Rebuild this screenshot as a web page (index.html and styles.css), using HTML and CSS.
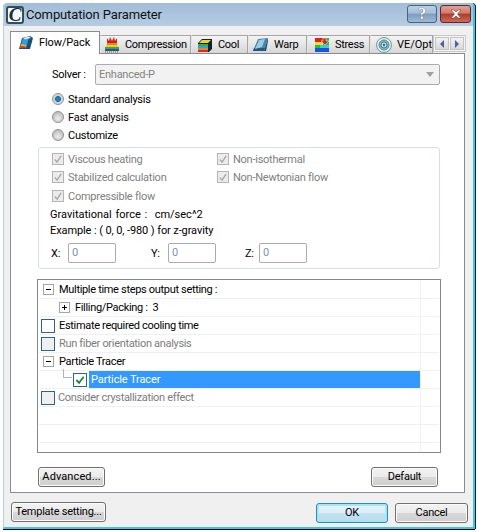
FILE: index.html
```html
<!DOCTYPE html>
<html lang="en">
<head>
<meta charset="utf-8">
<title>Computation Parameter</title>
<link rel="stylesheet" href="styles.css">
</head>
<body>
<div class="window">
  <header class="titlebar">
    <span class="app-logo">C</span>
    <span class="title">Computation Parameter</span>
    <span class="title-btn help">?</span>
    <span class="title-btn close">
      <svg width="14" height="10" viewBox="0 0 14 10"><path d="M2 1h3l2 2 2-2h3l-3.500 4 3.500 4h-3l-2-2-2 2h-3l3.500-4z" fill="#fff" stroke="#7a3a32" stroke-width=".6"/></svg>
    </span>
  </header>

  <div class="client">
    <div class="tabbar">
      <div class="tabs">
        <div class="tab active t-flow">
          <svg class="tab-icon" viewBox="0 0 16 16"><path d="M1 14 4 3l8-2 3 2-3 11z" fill="#1b4f72"/><path d="M2 13 4.500 4l6.500-2-2.500 10z" fill="#2a9fe0"/><path d="M2 13l1.200-4 5 1-.7 3z" fill="#f0b020"/><path d="M2 13l.6-2 5 .5-.4 1.500z" fill="#e03020"/><path d="M5 3l6-1.500 2 1.500-6 1.500z" fill="#dfe8ee"/></svg>
          <span>Flow/Pack</span>
        </div>
        <div class="tab t-comp">
          <svg class="tab-icon" viewBox="0 0 16 16"><path d="M1 12h14v2H1z" fill="#2050c0"/><path d="M1 10h14v2H1z" fill="#30b040"/><path d="M2 8h12v2H2z" fill="#f0d020"/><path d="M3 6h10v2H3z" fill="#f08020"/><path d="M3 1l2 3 1-4 2 4 2-4 1 4 2-3v5H3z" fill="#d02020"/><path d="M1 15h14" stroke="#c03030" stroke-dasharray="1 1"/></svg>
          <span>Compression</span>
        </div>
        <div class="tab t-cool">
          <svg class="tab-icon" viewBox="0 0 16 16"><path d="M1 6 5 2h10v10l-3 3H1z" fill="#123"/><path d="M2 6h9l3-3H5z" fill="#f0d020"/><path d="M1 9h10v2H1z" fill="#30a0e0"/><path d="M1 7h10v2H1z" fill="#30b040"/><path d="M1 11h10v2H1z" fill="#f08020"/><path d="M1 13h10v2H1z" fill="#d03020"/></svg>
          <span>Cool</span>
        </div>
        <div class="tab t-warp">
          <svg class="tab-icon" viewBox="0 0 16 16"><path d="M0 14 5 2l10-1-3 10z" fill="#3f88b0"/><path d="M0 14h11l1-3H1z" fill="#1f5a80"/><path d="M12 11l3-10v3l-2 10-2 0z" fill="#174562"/><path d="M2 12 6 3l6-1-3 8z" fill="#9ecbe2"/></svg>
          <span>Warp</span>
        </div>
        <div class="tab t-stress">
          <svg class="tab-icon" viewBox="0 0 16 16"><path d="M1 1h14v14H1z" fill="#20c040"/><path d="M1 1h10v4H1z" fill="#e02020"/><path d="M1 5h8v3H1z" fill="#f0e020"/><path d="M1 11h14v4H1z" fill="#2050e0"/><path d="M6 8h9v3H6z" fill="#30d0e0"/><path d="M9 1h3v3h3l-4 4-4-4h2z" fill="#d02020" stroke="#fff" stroke-width=".5"/></svg>
          <span>Stress</span>
        </div>
        <div class="tab t-ve">
          <svg class="tab-icon" viewBox="0 0 16 16"><circle cx="8" cy="8" r="7.500" fill="#e8f0f0" stroke="#6a9a9a"/><circle cx="8" cy="8" r="5" fill="#8fb8c8" stroke="#4a8a9a"/><circle cx="8" cy="8" r="3" fill="#cfe2ea" stroke="#3a7a90"/><circle cx="8" cy="8" r="1.200" fill="#2a6a80"/></svg>
          <span>VE/Opt</span>
        </div>
      </div>
      <div class="scroller">
        <span class="scroll-btn"><i class="arrow-left"></i></span>
        <span class="scroll-btn"><i class="arrow-right"></i></span>
      </div>
    </div>

    <section class="panel">
      <div class="solver-row">
        <label class="solver-label">Solver :</label>
        <div class="select">
          <span>Enhanced-P</span>
          <i class="caret"></i>
        </div>
      </div>

      <div class="radios">
        <div class="radio-row r1"><span class="radio on"></span><span class="radio-text">Standard analysis</span></div>
        <div class="radio-row r2"><span class="radio"></span><span class="radio-text">Fast analysis</span></div>
        <div class="radio-row r3"><span class="radio"></span><span class="radio-text">Customize</span></div>
      </div>

      <div class="group">
        <div class="checks">
          <div class="check-row"><span class="check"><svg viewBox="0 0 11 11"><path d="M2 6l2.500 3L9 2" class="tick"/></svg></span><span>Viscous heating</span></div>
          <div class="check-row"><span class="check"><svg viewBox="0 0 11 11"><path d="M2 6l2.500 3L9 2" class="tick"/></svg></span><span>Non-isothermal</span></div>
          <div class="check-row"><span class="check"><svg viewBox="0 0 11 11"><path d="M2 6l2.500 3L9 2" class="tick"/></svg></span><span>Stabilized calculation</span></div>
          <div class="check-row"><span class="check"><svg viewBox="0 0 11 11"><path d="M2 6l2.500 3L9 2" class="tick"/></svg></span><span>Non-Newtonian flow</span></div>
          <div class="check-row third"><span class="check"><svg viewBox="0 0 11 11"><path d="M2 6l2.500 3L9 2" class="tick"/></svg></span><span>Compressible flow</span></div>
        </div>
        <p class="note grav">Gravitational force :&nbsp; cm/sec^2</p>
        <p class="note example">Example : ( 0, 0, -980 ) for z-gravity</p>
        <div class="xyz">
          <label class="axis ax-x">X:</label><span class="num">0</span>
          <label class="axis ax-y">Y:</label><span class="num">0</span>
          <label class="axis ax-z">Z:</label><span class="num">0</span>
        </div>
      </div>

      <div class="tree">
        <div class="row">
          <div class="cell"><span class="exp minus"></span><span class="lbl">Multiple time steps output setting :</span></div><div class="end"></div>
        </div>
        <div class="row">
          <div class="cell lvl1"><span class="exp plus"></span><span class="lbl">Filling/Packing :&nbsp; 3</span></div><div class="end"></div>
        </div>
        <div class="row">
          <div class="cell"><span class="box"></span><span class="lbl">Estimate required cooling time</span></div><div class="end"></div>
        </div>
        <div class="row">
          <div class="cell"><span class="box dim"></span><span class="lbl muted">Run fiber orientation analysis</span></div><div class="end"></div>
        </div>
        <div class="row">
          <div class="cell"><span class="exp minus"></span><span class="lbl">Particle Tracer</span></div><div class="end"></div>
        </div>
        <div class="row">
          <div class="cell lvl2"><i class="elbow"></i><span class="box small"><svg viewBox="0 0 13 13"><path d="M2.500 6.500l3 3 5-6.500" class="green"/></svg></span><span class="lbl selected">Particle Tracer</span></div><div class="end"></div>
        </div>
        <div class="row">
          <div class="cell"><span class="box dim"></span><span class="lbl muted tight">Consider crystallization effect</span></div><div class="end"></div>
        </div>
        <div class="row"><div class="cell"></div><div class="end"></div></div>
        <div class="row"><div class="cell"></div><div class="end"></div></div>
        <div class="row last"><div class="cell"></div><div class="end"></div></div>
      </div>

      <div class="panel-actions">
        <button class="btn advanced">Advanced...</button>
        <button class="btn default">Default</button>
      </div>
    </section>

    <footer class="footer">
      <button class="btn template">Template setting...</button>
      <button class="btn ok">OK</button>
      <button class="btn cancel">Cancel</button>
    </footer>
  </div>
</div>
</body>
</html>
```

FILE: styles.css
```css
* { box-sizing: border-box; }
html, body { margin: 0; padding: 0; background: #fff; }
body {
  width: 477px;
  height: 532px;
  overflow: hidden;
  font-family: Roboto, "Liberation Sans", sans-serif;
  font-size: 11px;
  letter-spacing: -.25px;
  color: #000;
}
.window {
  width: 472px;
  height: 526px;
  margin: 3px 0 0 3px;
  display: flex;
  flex-direction: column;
  border-left: 1px solid #b7d0e6;
  border-right: 2px solid #3cc3f2;
  border-bottom: 2px solid #3cc3f2;
  border-radius: 4px 4px 0 0;
  box-shadow: 0 1px 0 #000, 1px 0 0 #222;
  background: #f0f0f0;
}

/* title bar */
.titlebar {
  height: 23px;
  flex: none;
  display: flex;
  align-items: center;
  padding: 0 1px 0 2px;
  background: linear-gradient(#a2bdd8, #b6cce2);
  border-radius: 4px 0 0 0;
}
.app-logo {
  width: 18px;
  height: 18px;
  margin-top: 1px;
  display: flex;
  align-items: center;
  justify-content: center;
  border: 2px solid #2f4f5f;
  border-radius: 3px;
  background: #f4f6f8;
  font-family: "Liberation Serif", serif;
  font-weight: bold;
  font-style: italic;
  font-size: 19px;
  letter-spacing: 0;
  color: #1c2c34;
}
.title {
  margin-left: 2px;
  font-size: 13px;
  letter-spacing: -.13px;
  color: #111;
  flex: 1;
}
.title-btn {
  height: 18px;
  width: 30px;
  margin-top: -1px;
  display: flex;
  align-items: center;
  justify-content: center;
  border: 1px solid #4d6276;
  border-radius: 3px;
}
.help {
  background: linear-gradient(#b9d0e6 0, #a5bfd9 45%, #7e9cbc 50%, #9db9d6 100%);
  color: #fff;
  font-family: "Liberation Serif", serif;
  font-weight: bold;
  font-size: 16px;
  text-shadow: 0 0 1px #223;
  margin-right: 3px;
}
.close {
  width: 31px;
  margin-right: 1px;
  background: linear-gradient(#e0a294 0, #cf7a6a 45%, #b03a2a 50%, #cc6a58 100%);
  border-color: #5d2a2a;
}

/* client */
.client {
  flex: 1;
  padding: 5px 0 0 6px;
  display: flex;
  flex-direction: column;
}
.tabbar {
  display: flex;
  height: 22px;
  width: 456px;
  position: relative;
  z-index: 2;
}
.tabs {
  display: flex;
  width: 423px;
  height: 23px;
  overflow: hidden;
  flex: none;
}
.tab {
  height: 18px;
  margin-top: 4px;
  display: flex;
  align-items: center;
  flex: none;
  font-size: 11px;
  letter-spacing: -.3px;
  border: 1px solid #a5a5a5;
  border-bottom: 0;
  border-left-color: #e6e6e6;
  background: linear-gradient(#f4f4f4, #d6d6d6);
}
.tab.active {
  height: 23px;
  margin-top: 0;
  padding-bottom: 1px;
  letter-spacing: -.1px;
  background: #fff;
  border: 1px solid #898c95;
  border-bottom: 0;
}
.tab-icon { width: 16px; height: 16px; flex: none; margin-right: 5px; }
.t-flow { width: 90px; padding-left: 7px; }
.t-comp { width: 91px; padding-left: 3px; }
.t-cool { width: 57px; padding-left: 5px; }
.t-warp { width: 59px; padding-left: 4px; }
.t-stress { width: 63px; padding-left: 6px; }
.t-ve { width: 63px; padding-left: 5px; white-space: nowrap; letter-spacing: 0; }
.scroller {
  margin-top: 4px;
  height: 17px;
  width: 33px;
  display: flex;
  gap: 1px;
  padding: 1px;
  border: 1px solid #c8c8c8;
  background: #f4f4f4;
  flex: none;
}
.scroll-btn {
  flex: 1;
  display: flex;
  align-items: center;
  justify-content: center;
  background: linear-gradient(#f2f2f2, #d8d8d8);
  border: 1px solid #c4c4c4;
}
.arrow-left, .arrow-right {
  width: 0;
  height: 0;
  border-top: 4px solid transparent;
  border-bottom: 4px solid transparent;
}
.arrow-left { border-right: 4px solid #4a5fa8; }
.arrow-right { border-left: 4px solid #4a5fa8; }

/* panel */
.panel {
  width: 455px;
  height: 440px;
  flex: none;
  border: 1px solid #898c95;
  background: #fff;
  padding: 10px 24px 0 27px;
}
.solver-row {
  display: flex;
  align-items: center;
  height: 21px;
  margin-left: 14px;
}
.solver-label { width: 43px; flex: none; }
.select {
  flex: 1;
  height: 21px;
  display: flex;
  align-items: center;
  justify-content: space-between;
  padding: 0 5px 0 3px;
  background: #f2f2f2;
  border: 1px solid #a8abaf;
  border-radius: 2px;
  color: #848484;
}
.caret {
  width: 0;
  height: 0;
  border-left: 4px solid transparent;
  border-right: 4px solid transparent;
  border-top: 5px solid #a0a0a0;
}
.radios { margin: 4px 0 0 14px; }
.radio-row { display: flex; align-items: center; height: 18px; }
.radio-row.r1 { height: 19px; }
.radio-text { padding-top: 1px; }
.radio {
  width: 12px;
  height: 12px;
  margin-right: 4px;
  border-radius: 50%;
  border: 1px solid #909090;
  background: radial-gradient(circle at 50% 65%, #ececec, #b0b0b0);
  flex: none;
}
.radio.on { background: radial-gradient(circle, #1e90c8 0, #1670a8 36%, #c8ced2 46%, #e8e8e8 100%); }

.group {
  width: 402px;
  height: 122px;
  margin-top: 3px;
  padding: 2px 0 0 13px;
  border: 1px solid #d5dfe5;
  border-radius: 3px;
}
.checks {
  display: grid;
  grid-template-columns: 165px 1fr;
  grid-auto-rows: 18px;
  color: #808080;
}
.check-row { display: flex; align-items: center; height: 18px; }
.check-row.third { margin-top: 1px; }
.check {
  width: 12px;
  height: 12px;
  margin-right: 4px;
  border: 1px solid #b4b4b4;
  background: #ececec;
  flex: none;
  display: flex;
}
.check svg { width: 100%; height: 100%; }
.tick { fill: none; stroke: #a8a8a8; stroke-width: 1.500; }
.note { margin: 0 0 0 -2px; line-height: 16px; height: 16px; letter-spacing: -.1px; }
.grav { margin-top: 3px; word-spacing: 1px; letter-spacing: 0; }
.xyz {
  display: flex;
  align-items: center;
  margin: 4px 0 0 -1px;
  height: 20px;
}
.axis { flex: none; padding-top: 1px; }
.ax-x { width: 17px; }
.ax-y { width: 17px; margin-left: 35px; }
.ax-z { width: 14px; margin-left: 29px; }
.num {
  width: 48px;
  height: 20px;
  padding: 2px 3px;
  border: 1px solid #ababab;
  border-radius: 2px;
  color: #7c93b8;
  flex: none;
}

/* tree list */
.tree {
  width: 404px;
  height: 174px;
  margin: 10px 0 0 -1px;
  padding: 1px;
  border: 1px solid #828790;
  overflow: hidden;
  letter-spacing: -.32px;
}
.row {
  display: flex;
  height: 18px;
  border-bottom: 1px solid #f0f0f0;
}
.row.last { border-bottom: 0; height: 9px; }
.cell {
  width: 381px;
  height: 17px;
  padding-left: 4px;
  display: flex;
  align-items: center;
  flex: none;
  position: relative;
}
.end { flex: 1; border-left: 1px solid #f0f0f0; }
.lbl { margin-left: 4px; height: 17px; line-height: 18px; }
.lvl1 { padding-left: 20px; }
.lvl2 { padding-left: 34px; }
.exp {
  width: 11px;
  height: 11px;
  border: 1px solid #a5a5a5;
  background: #fff;
  flex: none;
  position: relative;
}
.exp::before {
  content: "";
  position: absolute;
  left: 2px; top: 4px;
  width: 5px; height: 1px;
  background: #000;
}
.plus::after {
  content: "";
  position: absolute;
  left: 4px; top: 2px;
  width: 1px; height: 5px;
  background: #000;
}
.exp + .lbl { margin-left: 5px; }
.box {
  width: 14px;
  height: 14px;
  margin-left: -2px;
  border: 1px solid #2a6496;
  background: #fff;
  flex: none;
}
.box.dim { background: #f0f0f0; }
.box.small { display: flex; margin-left: 0; }
.box svg { width: 100%; height: 100%; }
.green { fill: none; stroke: #1e8c3a; stroke-width: 2; }
.muted { color: #7c7c7c; }
.lbl.tight { margin-left: 3px; }
.elbow {
  width: 9px;
  height: 9px;
  position: absolute;
  left: 24px;
  top: -2px;
  border-left: 1px solid #b4b4b4;
  border-bottom: 1px solid #b4b4b4;
}
.lbl.selected {
  flex: 1;
  margin-left: 2px;
  padding-left: 2px;
  background: #3399ff;
  color: #fff;
  letter-spacing: -.1px;
}

/* buttons */
.btn {
  height: 20px;
  padding: 0 0 1px;
  font: inherit;
  letter-spacing: inherit;
  color: #000;
  border: 1px solid #707070;
  border-radius: 3px;
  background: linear-gradient(#f3f3f3 0, #ebebeb 48%, #d8d8d8 52%, #cfcfcf 100%);
  box-shadow: inset 0 0 0 1px #fbfbfb;
}
.panel-actions {
  display: flex;
  justify-content: space-between;
  width: 400px;
  margin-top: 14px;
}
.advanced { width: 67px; letter-spacing: .1px; }
.default { width: 67px; }
.footer {
  display: flex;
  align-items: flex-start;
  padding: 9px 0 0 1px;
}
.template { width: 95px; }
.ok {
  width: 72px;
  margin: 1px 0 0 210px;
  border-color: #2a8ab8;
  box-shadow: inset 0 0 0 2px #a8e4f8;
  background: linear-gradient(#e8f4fa 0, #dceef6 48%, #c4e2f0 52%, #b8dcec 100%);
}
.cancel { width: 73px; margin: 1px 0 0 7px; }
```
